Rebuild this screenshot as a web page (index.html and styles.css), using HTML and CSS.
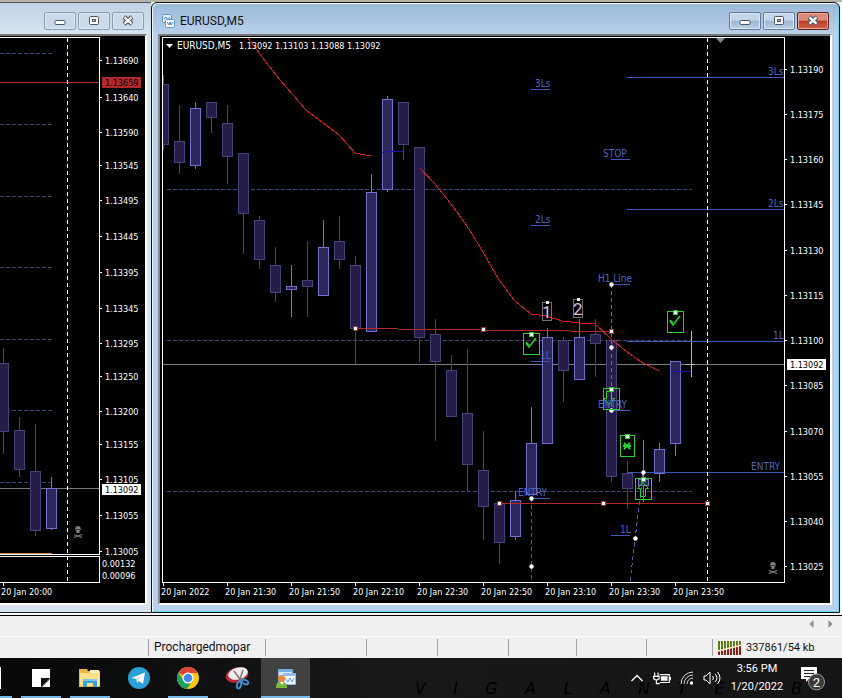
FILE: index.html
```html
<!DOCTYPE html>
<html lang="en">
<head>
<meta charset="utf-8">
<title>EURUSD,M5</title>
<link rel="stylesheet" href="styles.css">
</head>
<body>
<svg class="defs" aria-hidden="true">
  <symbol id="min" viewBox="0 0 14 12"><rect x="2" y="5.500" width="10" height="4" rx="1" fill="#fff" stroke="#4c5866"/></symbol>
  <symbol id="max" viewBox="0 0 14 12"><rect x="2.500" y="1.500" width="9" height="8" rx="1" fill="#fff" stroke="#4c5866"/><rect x="5.500" y="4.500" width="3" height="2" fill="#a9bfd6" stroke="#4c5866"/></symbol>
  <symbol id="close" viewBox="0 0 14 12"><path d="M3 2l8 7M11 2l-8 7" stroke="#4c5866" stroke-width="4.500"/><path d="M3.500 2.400l7 6.200M10.500 2.400l-7 6.200" stroke="#fff" stroke-width="2.300"/></symbol>
</svg>
<main class="workspace">
  <section class="window window-back">
    <header class="titlebar">
      <div class="controls">
        <button aria-label="Minimize"><svg><use href="#min"/></svg></button>
        <button aria-label="Maximize"><svg><use href="#max"/></svg></button>
        <button aria-label="Close"><svg><use href="#close"/></svg></button>
      </div>
    </header>
    <div class="pane"><svg class="chart" id="left" viewBox="0 36 145 567" preserveAspectRatio="xMinYMin meet"></svg></div>
  </section>
  <section class="window window-front">
    <header class="titlebar">
      <svg class="logo" viewBox="0 0 15 14"><rect x="1.500" y=".5" width="9" height="8" rx="1" fill="#dcecff" stroke="#5b94d8"/><path d="M3 5l2-2 2 3 2-3" fill="none" stroke="#4c87cf"/><rect x="4.500" y="5.500" width="9" height="8" rx="1" fill="#fff" stroke="#5b94d8"/><path d="M6 8l2 3 1-3 1 3 2-3" fill="none" stroke="#4c87cf"/></svg>
      <h1>EURUSD,M5</h1>
      <div class="controls">
        <button aria-label="Minimize"><svg><use href="#min"/></svg></button>
        <button aria-label="Maximize"><svg><use href="#max"/></svg></button>
        <button class="close" aria-label="Close"><svg><use href="#close"/></svg></button>
      </div>
    </header>
    <div class="pane"><svg class="chart" id="right" viewBox="160 36 670 567" preserveAspectRatio="xMinYMin meet"></svg></div>
  </section>
</main>
<div class="scroller">
  <button aria-label="Scroll left"><svg viewBox="0 0 5 8"><path d="M4.500 0v8L.5 4z"/></svg></button>
  <button aria-label="Scroll right"><svg viewBox="0 0 5 8"><path d="M.5 0v8l4-4z"/></svg></button>
</div>
<div class="status">
  <span></span><span>Prochargedmopar</span><span></span><span></span><span></span><span></span><span></span><span></span>
  <span class="traffic"><svg viewBox="0 0 24 14"><path d="M1 0v14M4 0v14M7 0v14M10 0v14M13 0v14M16 0v14M19 0v14M22 0v14" stroke="#8e1b12" stroke-width="2"/><path d="M1 0v9M4 0v9M7 0v8M10 0v7M13 0v6M16 0v5M19 0v4M22 0v3" stroke="#5b7d13" stroke-width="2"/><path d="M0 10L24 4" stroke="#f6f2c8" stroke-width="1.300"/></svg>337861/54 kb</span>
</div>
<footer class="taskbar">
  <div class="wallpaper" aria-hidden="true"><i>V</i><i>I</i><i>G</i><i>A</i><i>L</i><i>A</i><i>N</i><i>T</i><i>E</i><i>U</i><i>B</i></div>
  <nav class="apps">
    <button class="running" aria-label="Files"><svg viewBox="0 0 24 24"><path d="M0 1h21v22H0z" fill="#fff"/></svg></button>
    <button class="running" aria-label="Sticky Notes"><svg viewBox="0 0 24 24"><path d="M3 3h18v9l-9 9H3z" fill="#fff"/><path d="M12 12h9l-9 9z" fill="#111"/><path d="M21 13v8h-8z" fill="#fff"/></svg></button>
    <button class="running" aria-label="File Explorer"><svg viewBox="0 0 24 24"><path d="M1 3h8l1 2h12v16H1z" fill="#e8b93c"/><path d="M2 7h20v13H2z" fill="#fbe08a"/><path d="M12 4h9v3h-9z" fill="#fff0b8"/><path d="M5 21v-8h14v8h-4v-4H9v4z" fill="#35a3dc"/><path d="M5 13h14v2H5z" fill="#7cc9ee"/></svg></button>
    <button aria-label="Telegram"><svg viewBox="0 0 24 24"><circle cx="12" cy="12" r="11" fill="#2a9fd8"/><path d="M4.500 12L18 6.500 16 18l-4-3-2 2-.5-4z" fill="#fff"/><path d="M9.500 13L16 8.500 11 14l-1 3z" fill="#b7d9ec"/></svg></button>
    <button class="running" aria-label="Chrome"><svg viewBox="0 0 24 24"><circle cx="12" cy="12" r="11" fill="#f9c515"/><path d="M12 12L2.500 6.500A11 11 0 0 1 21.500 6.500L22 7H12z" fill="#dc4437"/><path d="M2.500 6.500A11 11 0 0 0 11 23l5-8-8.500-.5z" fill="#1da15c"/><circle cx="12" cy="12" r="5.500" fill="#fff"/><circle cx="12" cy="12" r="4.300" fill="#4586ee"/></svg></button>
    <button aria-label="Snipping Tool"><svg viewBox="0 0 24 24"><ellipse cx="12" cy="9" rx="11.500" ry="7.500" transform="rotate(-15 12 9)" fill="#b92a35"/><ellipse cx="13" cy="7.500" rx="10" ry="6" transform="rotate(-15 13 7.500)" fill="#f3ecec"/><path d="M9 5l8 11M18 4l-4 12" stroke="#777" stroke-width="1.500"/><g fill="none" stroke="#3c8cd2" stroke-width="2"><ellipse cx="14" cy="19" rx="2" ry="3.500" transform="rotate(15 14 19)"/><ellipse cx="20" cy="16" rx="3.500" ry="2" transform="rotate(25 20 16)"/></g></svg></button>
    <button class="active" aria-label="MetaTrader"><svg viewBox="0 0 24 24"><rect x="4" y="3" width="15" height="13" rx="1" fill="#76aee2"/><path d="M5 6h13v9H5z" fill="#dceafa"/><rect x="9" y="7" width="13" height="12" rx="1" fill="#8fbdea"/><path d="M10 10h11v8H10z" fill="#eff6ff"/><path d="M11 12l3 4 2-4 2 4 2-4" fill="none" stroke="#6d9fd3"/><path d="M2 22c0-5 2-7 5-7s6 2 6 7z" fill="#75b83b"/><circle cx="7.500" cy="12.500" r="3.500" fill="#e58b43"/><path d="M6 16l2 3 2-3z" fill="#fff"/></svg></button>
  </nav>
  <div class="tray">
    <svg viewBox="0 0 14 10"><path d="M1.500 8L7 2.500 12.500 8" fill="none" stroke="#fff" stroke-width="1.300"/></svg>
    <svg class="battery" viewBox="0 0 16 12"><path d="M1.500 1v3M4.500 1v3M.5 4.500h5v2L3 8 .5 6.500zM3 8v3h3" fill="none" stroke="#fff"/><path d="M6 3h8.500v7H6" fill="none" stroke="#fff"/><path d="M7 4.500h6v4H7zM15 5h1v3h-1z" fill="#fff"/></svg>
    <svg viewBox="0 0 14 14"><g fill="none" stroke="#ddd"><path d="M1 13A12 12 0 0 1 13 1M4 13a9 9 0 0 1 9-9M7 13a6 6 0 0 1 6-6"/></g><circle cx="11.500" cy="12" r="1.700" fill="#fff"/></svg>
    <svg class="sound" viewBox="0 0 18 14"><path d="M1 5h2l4-4v12L3 9H1zM9.500 5q2 2 0 4M12 3q4 4 0 8M14.500 1q5 6 0 12" fill="none" stroke="#fff"/></svg>
    <time class="clock"><span>3:56 PM</span><span>1/20/2022</span></time>
    <button class="notes" aria-label="Notifications"><svg viewBox="0 0 26 26"><path d="M1 2h16v12H9l-3 3v-3H1z" fill="#fff"/><path d="M4 5.500h10M4 8.500h10M4 11.500h7" stroke="#222"/><circle cx="16.500" cy="17" r="8" fill="#3a3a3a" stroke="#9a9a9a"/><text x="16.500" y="22" text-anchor="middle">2</text></svg></button>
  </div>
</footer>
<script src="chart.js"></script>
</body>
</html>
```
FILE: styles.css
```css
* { box-sizing: border-box; }
body {
  margin: 0;
  height: 100vh;
  display: flex;
  flex-direction: column;
  overflow: hidden;
  background: #f0f0f0;
  font: 12px/16px Roboto, sans-serif;
  color: #111;
}
button { border: 0; padding: 0; background: none; font: inherit; color: inherit; }
svg { display: block; }
.defs { position: absolute; width: 0; height: 0; }

.workspace {
  flex: 1;
  min-height: 0;
  display: flex;
  padding-bottom: 2px;
  background: #f6f6f6;
  border-top: 2px solid #b5b2a8;
  border-bottom: 1px solid #000;
}
.window { display: flex; flex-direction: column; border-top: 1px solid #59595c; border-bottom: 1px solid #222; }
.window-back {
  flex: 0 0 151px;
  padding: 1px 4px 7px 0;
  background: linear-gradient(#c2d2e4, #d9e4f1 32px, #d6e2f0);
}
.window-front {
  flex: 1;
  min-width: 0;
  margin-right: 2px;
  padding: 1px 7px 7px 6px;
  border: 1px solid #111;
  border-radius: 6px 6px 0 0;
  box-shadow: inset 1px 1px #eef7ff, inset -1px -1px #62d6f5;
  background: linear-gradient(#9bb8d8, #b9d1ea 32px, #b9d1ea);
}
.titlebar { flex: 0 0 30px; display: flex; align-items: center; padding: 4px 3px 0 3px; }
.titlebar h1 { margin: 0 0 0 4px; font-size: 12px; font-weight: 400; line-height: 16px; }
.logo { width: 15px; height: 14px; }
.controls { display: flex; gap: 2px; margin-left: auto; }
.controls button {
  width: 32px;
  height: 18px;
  display: grid;
  place-items: center;
  border: 1px solid #65799a;
  border-radius: 2px;
  box-shadow: inset 0 0 0 1px #dbe9f7;
  background: linear-gradient(#c3d6ea 45%, #9fb8d2 50%, #b8d0e8);
}
.window-back .controls button { border-color: #8b9bb3; background: #cbd9e9; }
.controls .close { border-color: #5a2018; box-shadow: inset 0 0 0 1px #e9a89c; background: linear-gradient(#dd8b7c 45%, #bd3a25 50%, #cf6248); }
.controls svg { width: 14px; height: 12px; }
.pane { flex: 1; min-height: 0; overflow: hidden; background: #000; border: solid #fff; border-width: 0 2px 2px 0; border-top: 2px solid #777; }
.window-front .pane { border-left: 2px solid #808890; }
.chart { width: 100%; }

.chart text { font: 9px "DejaVu Sans Condensed", "DejaVu Sans", sans-serif; fill: #fff; }
.chart .head { font-size: 10px; }
.chart .tag { font-size: 10px; fill: #4a66c4; }
.chart .count { font: 17px Roboto, sans-serif; fill: #dcbfe0; }
.chart .ink { fill: #000; }
.chart .dark { fill: #261e49; stroke: #484078; }
.chart .bright { fill: #2b2758; stroke: #766ed0; }
.chart line, .chart polyline, .chart path { fill: none; }
.chart line, .chart polyline, .chart rect { shape-rendering: crispEdges; }

.scroller { flex: 0 0 20px; display: flex; justify-content: flex-end; align-items: center; gap: 14px; padding: 0 9px 4px 0; }
.scroller svg { width: 5px; height: 8px; fill: #8a8a8a; }
.status {
  flex: 0 0 22px;
  display: grid;
  grid-template-columns: 148px 117px 101px 71px 71px 68px 70px 66px 1fr;
  padding: 2px 0;
  border-top: 1px solid #fff;
}
.status span { padding-left: 5px; border-left: 1px solid #a0a0a0; }
.status span:first-child { border: 0; }
.status .traffic { display: flex; align-items: center; gap: 4px; font-size: 11px; white-space: nowrap; }
.traffic svg { width: 24px; height: 14px; }

.taskbar { position: relative; flex: 0 0 40px; display: flex; overflow: hidden; background: linear-gradient(90deg, #080808, #17181a 45%, #151515); color: #fff; }
.wallpaper { position: absolute; left: 415px; right: 40px; bottom: 0; display: flex; justify-content: space-between; font: italic 16px/18px "DejaVu Sans", sans-serif; color: #000; }
.apps { position: relative; display: flex; margin-left: -33px; }
.apps button { width: 49px; height: 40px; display: flex; flex-direction: column; align-items: center; justify-content: flex-end; }
.apps button::after { content: ""; width: 40px; height: 2px; margin-top: 6px; }
.apps .running::after, .apps .active::after { background: #76b9ed; }
.apps .active { background: #414141; }
.apps .active::after { width: 100%; }
.apps svg { width: 24px; height: 24px; }
.tray { position: relative; display: flex; align-items: center; gap: 9px; margin-left: auto; padding-right: 16px; }
.tray svg { width: 14px; height: 14px; }
.tray .battery { width: 18px; }
.tray .sound { width: 18px; }
.clock { display: flex; flex-direction: column; align-items: center; width: 54px; font-size: 11px; line-height: 18px; }
.notes { margin-left: 7px; }
.tray .notes svg { width: 26px; height: 26px; }
.notes text { font: 13px Roboto, sans-serif; fill: #fff; }
```
FILE: chart.js
```js
const line = (x1, y1, x2, y2, c, extra = "") =>
  `<line x1="${x1}" y1="${y1}" x2="${x2}" y2="${y2}" stroke="${c}" ${extra}/>`;
const text = (x, y, s, cls = "") => `<text x="${x}" y="${y}" class="${cls}">${s}</text>`;
const box = (x, y, w, h, fill, stroke = "none") =>
  `<rect x="${x}" y="${y}" width="${w}" height="${h}" fill="${fill}" stroke="${stroke}"/>`;
const dash = 'stroke-dasharray="4 3"';
const wide = 'stroke-dasharray="4 2"';

// Candle: centre x, high, body top, body bottom, low, rising flag
const candle = ([x, hi, top, bot, lo, up]) => {
  const cls = up ? "bright" : "dark";
  return `<path class="${cls}" d="M${x + .5} ${hi}V${lo}"/>` +
    `<rect class="${cls}" x="${x - 4.5}" y="${top + .5}" width="10" height="${bot - top}"/>`;
};
const handle = (x, y) => box(x - 1.5, y - 1.5, 4, 4, "#fff", "#a83030");
const dot = (x, y) => `<circle cx="${x + .5}" cy="${y + .5}" r="2.2" fill="#fff"/>`;
const skull = (x, y) => `<g transform="translate(${x} ${y})"><circle cx="5" cy="2.700" r="2.700" fill="#808080"/>` +
  `<path d="M5 5v2" stroke="#808080" stroke-width="3"/><path d="M1 8.500l8 3M9 8.500l-8 3" stroke="#808080" stroke-width="1.200"/>` +
  `<path d="M3.300 3.500h1.200M5.500 3.500h1.200" stroke="#000"/></g>`;
const priceTag = (x, y, s, bg, cls) => box(x, y - 5, 39, 11, bg) + text(x + 3, y + 4, s, cls);

const axis = (x, list) => list.map(([y, s]) => line(x, y + .5, x + 3, y + .5, "#fff") + text(x + 6, y + 4, s)).join("");

function drawLeft() {
  let o = "";
  [53, 124, 196, 267, 339, 410, 482].forEach(y => o += line(0, y + .5, 52, y + .5, "#454176", wide));
  o += line(0, 82.5, 99, 82.5, "#b52c2c") + line(0, 488.5, 99, 488.5, "#777");
  o += [[3, 348, 363, 431, 454], [19, 417, 430, 469, 477], [35, 424, 471, 530, 536], [51, 477, 488, 528, 530, 1]].map(candle).join("");
  o += line(0, 37.5, 99, 37.5, "#fff") + line(99.5, 37, 99.5, 555, "#fff") + line(0, 554.5, 99, 554.5, "#fff");
  o += line(0, 553.5, 52, 553.5, "#d08a50");
  o += line(0, 556.5, 99, 556.5, "#fff") + line(99.5, 556, 99.5, 583, "#fff") + line(0, 582.5, 100, 582.5, "#fff");
  o += line(67.5, 38, 67.5, 582, "#fff", dash);
  o += axis(99, [[60, "1.13690"], [97, "1.13640"], [132, "1.13590"], [165, "1.13545"], [200, "1.13495"], [236, "1.13445"],
    [272, "1.13395"], [308, "1.13345"], [343, "1.13295"], [376, "1.13250"], [411, "1.13200"], [444, "1.13155"],
    [479, "1.13105"], [515, "1.13055"], [551, "1.13005"]]);
  o += priceTag(102, 82, "1.13659", "#b3262c", "ink") + priceTag(102, 489, "1.13092", "#fff", "ink");
  o += text(102, 567, "0.00132") + text(102, 579, "0.00096");
  o += line(3.5, 583, 3.5, 586, "#fff") + text(1, 595, "20 Jan 20:00") + skull(73, 526);
  document.getElementById("left").innerHTML = o;
}

function drawRight() {
  let o = "";
  [189, 340, 491].forEach(y => o += line(167, y + .5, 692, y + .5, "#454176", wide));
  o += line(163, 364.5, 784, 364.5, "#7d7d7d");
  o += '<clipPath id="plot"><path d="M163 38H784V582H163z"/></clipPath><g clip-path="url(#plot)">';
  o += [
    [163, 75, 84, 144, 150], [179, 105, 141, 162, 174], [195, 102, 108, 165, 169, 1], [211, 102, 102, 117, 133],
    [227, 105, 123, 156, 184], [243, 153, 153, 213, 254], [259, 216, 220, 259, 269], [275, 247, 265, 292, 302],
    [291, 265, 286, 289, 317, 1], [307, 241, 280, 286, 317], [323, 220, 247, 295, 296, 1], [339, 216, 241, 259, 269],
    [355, 256, 265, 328, 364], [371, 174, 192, 331, 332, 1], [387, 96, 99, 189, 192, 1], [403, 102, 102, 144, 160],
    [419, 147, 147, 337, 362], [435, 319, 334, 361, 441], [451, 355, 370, 416, 417], [467, 349, 413, 464, 491],
    [483, 431, 470, 506, 540], [499, 503, 503, 542, 564], [515, 491, 500, 536, 540, 1], [531, 407, 443, 494, 495, 1],
    [547, 328, 337, 443, 444, 1], [563, 337, 340, 370, 402], [579, 319, 337, 379, 380, 1], [595, 319, 334, 343, 377],
    [611, 340, 340, 476, 482], [627, 461, 473, 488, 509], [643, 440, 479, 485, 502, 1], [659, 443, 449, 473, 482, 1],
    [675, 361, 361, 443, 456, 1]
  ].map(candle).join("") + "</g>";
  o += line(691.5, 331, 691.5, 377, "#b9b6a8") + line(686, 364.5, 695, 364.5, "#b9b6a8");
  o += '<polyline points="248,38 262,57 280,80 306,110 339,135 355,153 371,156" stroke="#d81b1b"/>';
  o += '<polyline points="419,167 435,184 451,204 467,226 483,252 499,280 515,301 531,314 546,316 562,321 580,323 595,324 611,339 627,352 643,363 659,371" stroke="#d81b1b"/>';
  o += '<polyline points="382,153 388,151.500 403,151.500" stroke="#1a14a8"/><polyline points="415,163 420,168" stroke="#1a14a8"/>' + line(671, 371.5, 691, 371.5, "#1a14a8");
  o += line(355, 328.5, 611, 331.5, "#b02a2a") + line(499, 503.5, 707, 503.5, "#b02a2a");

  [[77, "3Ls", 768], [209, "2Ls", 768], [341, "1L", 773], [472, "ENTRY", 751]].forEach(([y, s, x]) =>
    o += line(627, y + .5, 784, y + .5, "#4058b8") + text(x, y - 2, s, "tag"));
  [[535, 89, "3Ls", 531], [535, 225, "2Ls", 531], [540, 361, "1L", 531], [603, 159, "STOP", 611], [598, 284, "H1 Line", 611],
   [598, 410, "ENTRY", 611], [518, 498, "ENTRY", 531], [620, 535, "1L", 611]].forEach(([x, y, s, lx]) =>
    o += text(x, y - 2, s, "tag") + line(lx, y + .5, lx + 19, y + .5, "#4058b8"));
  o += line(611.5, 284, 611.5, 410, "#6e68bd", dash) + line(531.5, 498, 531.5, 582, "#5d58a4", dash) + line(643, 473, 630, 582, "#5d58a4", dash);
  [[611, 284], [611, 347], [611, 410], [531, 498], [531, 566], [643, 472], [635, 538]].forEach(p => o += dot(...p));
  [[355, 328], [483, 329], [611, 331], [499, 503], [603, 503], [707, 503]].forEach(p => o += handle(...p));

  const green = "#29d12f";
  [[523, 333, 16], [667, 311, 16], [603, 388, 16], [620, 435, 14], [635, 478, 16]].forEach(([x, y, w]) =>
    o += box(x + .5, y + .5, w, 21, "none", green) + box(x + w / 2 - 1.5, y - .5, 4, 4, "#dfffdc", green));
  o += `<g stroke="${green}"><path d="M526 343l3 4 7-9M526 342l3 3M670 321l3 4 7-9M670 320l3 3" stroke-width="1.500"/>` +
    '<path d="M606.500 391.500h5v7h3l-5.500 6-5.500-6h3zM640.500 496.500h5v-8h3l-5.500-6-5.500 6h3z"/>' +
    '<path d="M624 443l6 6M630 443l-6 6M623 446h8" stroke-width="2"/></g>';
  [[543, 302, "1"], [574, 299, "2"]].forEach(([x, y, s]) =>
    o += box(x - .5, y + .5, 9, 18, "none", "#77727a") + text(x - 1, y + 16, s, "count") + box(x + 3, y - 1, 3, 3, "#eee"));

  o += line(162, 37.5, 785, 37.5, "#fff") + line(162.5, 37, 162.5, 583, "#fff") + line(162, 582.5, 785, 582.5, "#fff") + line(784.5, 37, 784.5, 583, "#fff");
  o += line(707.5, 38, 707.5, 582, "#fff", dash) + '<polygon points="716,38 725,38 720.500,43" fill="#888"/>';
  o += handle(707, 503) + '<polygon points="166,44 173,44 169.500,48" fill="#fff"/>';
  o += text(177, 49, "EURUSD,M5", "head");
  ["1.13092", "1.13103", "1.13088", "1.13092"].forEach((s, i) => o += text(239 + 36 * i, 49, s));
  o += axis(784, [70, 115, 160, 205, 251, 296, 341, 386, 432, 477, 522, 567].map((y, i) => [y - 1, (1.1319 - i * .00015).toFixed(5)]));
  o += priceTag(787, 364, "1.13092", "#fff", "ink");
  ["2022", "21:30", "21:50", "22:10", "22:30", "22:50", "23:10", "23:30", "23:50"].forEach((s, i) =>
    o += line(163.5 + 64 * i, 583, 163.5 + 64 * i, 586, "#fff") + text(161 + 64 * i, 595, "20 Jan " + s));
  o += skull(768, 562);
  document.getElementById("right").innerHTML = o;
}

drawLeft();
drawRight();
```
